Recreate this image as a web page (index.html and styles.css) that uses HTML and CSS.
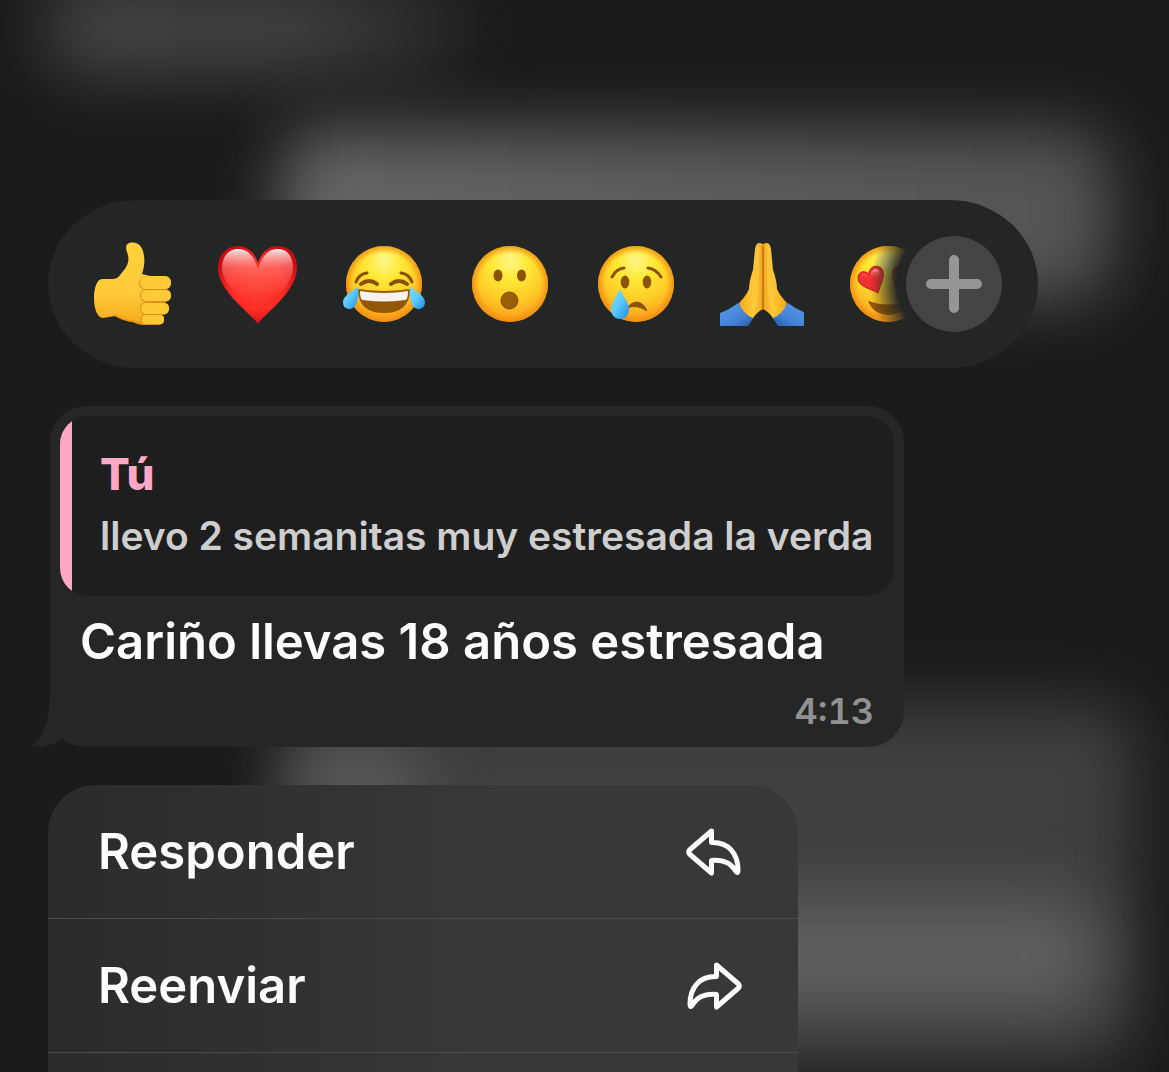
FILE: index.html
```html
<!DOCTYPE html>
<html lang="es">
<head>
<meta charset="utf-8">
<meta name="viewport" content="width=device-width, initial-scale=1">
<title>Chat</title>
<link rel="stylesheet" href="styles.css">
</head>
<body>
<div class="backdrop" aria-hidden="true">
  <span class="glow glow-header"></span>
  <span class="glow glow-upper"></span>
  <span class="glow glow-lower"></span>
  <span class="glow glow-spot"></span>
  <span class="glow glow-band"></span>
</div>

<svg class="defs" width="0" height="0" aria-hidden="true">
  <defs>
    <radialGradient id="face" cx=".5" cy=".2" r=".8">
      <stop offset="0" stop-color="#fff68a"/><stop offset=".3" stop-color="#ffe935"/><stop offset=".65" stop-color="#ffcb26"/><stop offset="1" stop-color="#fb9a1c"/>
    </radialGradient>
    <radialGradient id="rim" cx=".5" cy=".5" r=".5">
      <stop offset=".8" stop-color="#f49312" stop-opacity="0"/><stop offset="1" stop-color="#ef8a10" stop-opacity=".85"/>
    </radialGradient>
    <linearGradient id="tear" x1="0" y1="0" x2="1" y2="1">
      <stop offset="0" stop-color="#79dcff"/><stop offset=".5" stop-color="#5cc8fb"/><stop offset="1" stop-color="#168be6"/>
    </linearGradient>
    <radialGradient id="red" cx=".5" cy=".5" r=".55">
      <stop offset="0" stop-color="#ff3f2c"/><stop offset=".6" stop-color="#fb2c25"/><stop offset="1" stop-color="#c90a15"/>
    </radialGradient>
    <linearGradient id="gloss" x1="0" y1="0" x2="0" y2="1">
      <stop offset="0" stop-color="#fff" stop-opacity=".9"/><stop offset=".35" stop-color="#ff8e86" stop-opacity=".55"/><stop offset="1" stop-color="#ff5a50" stop-opacity="0"/>
    </linearGradient>
    <linearGradient id="skin" x1="0" y1="0" x2="0" y2="1">
      <stop offset="0" stop-color="#ffd03c"/><stop offset=".6" stop-color="#ffcb3a"/><stop offset="1" stop-color="#f3a91c"/>
    </linearGradient>
    <linearGradient id="palm" x1="0" y1="0" x2="1" y2="0">
      <stop offset="0" stop-color="#f5a81b"/><stop offset=".6" stop-color="#ffc935"/><stop offset="1" stop-color="#f0a322"/>
    </linearGradient>
    <linearGradient id="sleeve" x1="0" y1="0" x2="1" y2="1">
      <stop offset="0" stop-color="#5a9bea"/><stop offset=".6" stop-color="#4583d6"/><stop offset="1" stop-color="#2459a8"/>
    </linearGradient>
    <g id="head"><circle cx="42" cy="42" r="38" fill="url(#face)"/><circle cx="42" cy="42" r="38" fill="url(#rim)"/></g>
    <g id="hand">
      <path d="M18 61Q9 68 0 71V84H28L34 75Z" fill="url(#sleeve)"/>
      <path d="M43.500 3Q42 .5 39 1Q36 1 35 7L33 28Q29 39 29 47Q26 54 19 61Q23 72 33 76Q38 69 43.500 67Z" fill="url(#palm)"/>
      <path d="M38 6L37 50Q36 60 31 66" fill="none" stroke="#ffdb57" stroke-opacity=".3" stroke-width="3" stroke-linecap="round"/>
    </g>
  </defs>
</svg>

<main class="screen">
  <section class="reactions" aria-label="Reacciones">
    <div class="reaction-list">
      <button class="reaction" type="button" aria-label="Me gusta">
        <svg viewBox="0 0 84 84">
          <path d="M43 .5C36 0 35 5 37 10C40 18 38 23 34 28C30 33 28 37 23 37H12C7 37 4 46 4 56C4 66 7 76 13 76L25 74Q33 79 43 80Q49 83 58 83L60 34L52 32C54 26 55 20 54 14C53 5 49 1 43 .5Z" fill="url(#skin)"/>
          <path d="M25 73Q33 78 43 79Q49 82 58 82" fill="none" stroke="#e79a1a" stroke-width="2"/>
          <g fill="#dc9120"><rect x="49" y="34" width="32" height="14" rx="7"/><rect x="50" y="47" width="31" height="13" rx="6"/><rect x="50" y="60" width="29" height="13" rx="6"/><rect x="51" y="72" width="23" height="11" rx="5"/></g>
          <g fill="#ffca38"><rect x="50" y="34" width="31" height="13" rx="6"/><rect x="51" y="48" width="30" height="11" rx="5"/><rect x="51" y="61" width="28" height="11" rx="5"/><rect x="52" y="73" width="22" height="9" rx="4"/></g>
        </svg>
      </button>
      <button class="reaction" type="button" aria-label="Corazón">
        <svg viewBox="0 0 84 84">
          <path d="M42 82C37 73 2 50 2 26C2 12 11 4 22 4C32 4 39 11 42 21C45 11 52 4 62 4C73 4 81 12 81 26C81 50 47 73 42 82Z" fill="url(#red)"/>
          <path d="M42 60C26 60 6 42 6 26C6 14 13 7 22 7C32 7 38 14 42 27C46 14 52 7 62 7C71 7 77 14 77 26C77 42 58 60 42 60Z" fill="url(#gloss)"/>
        </svg>
      </button>
      <button class="reaction" type="button" aria-label="Risa">
        <svg viewBox="0 0 84 84">
          <use href="#head"/>
          <g fill="none" stroke="#895006" stroke-width="3" stroke-linecap="round"><path d="M14 40Q17 32 25 31M70 40Q67 32 59 31"/><path d="M19 42Q27 36 35 42M49 42Q57 36 65 42" stroke-width="4"/></g>
          <path d="M16 47Q42 51 68 47Q68 71 42 71Q16 71 16 47Z" fill="#925707"/>
          <path d="M18 49Q42 53 66 49Q66 58 63 58Q42 61 21 58Q18 58 18 49Z" fill="#f5f1ee"/>
          <path d="M16 45C10 49 1 54 1 60C1 65 4 67 8 67C15 66 17 56 16 45Z" fill="url(#tear)"/>
          <path d="M68 45C74 49 83 54 83 60C83 65 80 67 76 67C69 66 67 56 68 45Z" fill="url(#tear)"/>
        </svg>
      </button>
      <button class="reaction" type="button" aria-label="Sorpresa">
        <svg viewBox="0 0 84 84">
          <use href="#head"/>
          <g fill="#8b5307"><ellipse cx="30" cy="33.500" rx="4.500" ry="6"/><ellipse cx="53.500" cy="33.500" rx="4.500" ry="6"/></g>
          <circle cx="41.500" cy="58.500" r="8.500" fill="#965f08" stroke="#814d06"/>
        </svg>
      </button>
      <button class="reaction" type="button" aria-label="Tristeza">
        <svg viewBox="0 0 84 84">
          <use href="#head"/>
          <g fill="#8b5307"><ellipse cx="31" cy="40" rx="4.300" ry="6.500"/><ellipse cx="53" cy="40" rx="4.300" ry="6.500"/></g>
          <g fill="none" stroke="#8b5307" stroke-width="3" stroke-linecap="round"><path d="M18 35Q22 27 30 26M54 26Q62 27 67 35"/></g>
          <path d="M33 66Q37 60 43 60Q50 61 53 69Q43 62 33 66Z" fill="#8b5307" stroke="#8b5307" stroke-linejoin="round"/>
          <path d="M26 47C23 54 17 61 17 67C17 73 21 77 26 77C31 77 35 73 35 67C35 61 29 54 26 47Z" fill="url(#tear)"/>
        </svg>
      </button>
      <button class="reaction" type="button" aria-label="Gracias">
        <svg viewBox="0 0 84 84">
          <use href="#hand"/>
          <use href="#hand" transform="translate(86 0) scale(-1 1)"/>
          <path d="M43 4V67" stroke="#b96d0c" stroke-width="1.500"/>
        </svg>
      </button>
      <button class="reaction" type="button" aria-label="Me encanta">
        <svg viewBox="0 0 84 84">
          <use href="#head"/>
          <path d="M22 59Q42 66 62 59Q57 73 42 73Q27 72 22 59Z" fill="#925707"/>
          <g fill="#f42f32" stroke="#ba1825" stroke-width="1"><path d="M32 51C26 47 12 45 12 36C12 31 17 27 23 32C23 25 30 22 35 26C41 32 34 43 32 51Z"/><path d="M52 51C58 47 72 45 72 36C72 31 67 27 61 32C61 25 54 22 49 26C43 32 50 43 52 51Z"/></g>
          <path d="M15 35Q15 31 20 32Q22 34 24 36Q24 28 30 27Q35 28 33 35Q25 39 15 35Z" fill="url(#gloss)"/>
        </svg>
      </button>
    </div>
    <button class="more" type="button" aria-label="Más reacciones">
      <svg viewBox="0 0 96 96"><path d="M48 24V72M25 48H71" stroke="#969497" stroke-width="10" stroke-linecap="round"/></svg>
    </button>
  </section>

  <article class="bubble">
    <svg class="tail" viewBox="0 0 44 60" aria-hidden="true"><path d="M18 0C18 28 15 46 0 59Q19 62 30 51Q36 57 44 59V0Z" fill="#252726"/></svg>
    <blockquote class="quote">
      <p class="quote-author">Tú</p>
      <p class="quote-text">llevo 2 semanitas muy estresada la verda</p>
    </blockquote>
    <p class="message">Cariño llevas 18 años estresada</p>
    <time class="time" datetime="04:13">4:13</time>
  </article>

  <nav class="menu" aria-label="Opciones del mensaje">
    <button class="menu-item" type="button">
      <span>Responder</span>
      <svg class="menu-icon" viewBox="0 0 56 48" aria-hidden="true"><path d="M25.500 3L3.500 22Q2 24 3.500 26L25.500 45V32.500C38 31.500 45 35 50 43.500Q52 46 52 42C52 26 43 14 25.500 14.500Z"/></svg>
    </button>
    <button class="menu-item" type="button">
      <span>Reenviar</span>
      <svg class="menu-icon" viewBox="0 0 56 48" aria-hidden="true"><path d="M30.500 3L52.500 22Q54 24 52.500 26L30.500 45V32.500C18 31.500 11 35 6 43.500Q4 46 4 42C4 26 13 14 30.500 14.500Z"/></svg>
    </button>
  </nav>
</main>
</body>
</html>
```
FILE: styles.css
```css
* {
  box-sizing: border-box;
}

body {
  margin: 0;
  background: #1b1b1b;
  color: #fcfcfc;
  font-family: Inter, "Liberation Sans", sans-serif;
}

button {
  margin: 0;
  padding: 0;
  border: 0;
  background: none;
  color: inherit;
  font: inherit;
}

svg {
  display: block;
}

p,
blockquote {
  margin: 0;
}

.defs {
  position: absolute;
}

/* Out-of-focus conversation behind the overlay */
.backdrop {
  position: absolute;
  inset: 0;
  overflow: hidden;
}

.glow {
  position: absolute;
  border-radius: 40px;
  filter: blur(32px);
}

.glow-header {
  left: 4%;
  top: -20px;
  width: 36%;
  height: 96px;
  background: linear-gradient(90deg, #454545, #404040 60%, #252525);
}

.glow-upper {
  left: 24%;
  right: 5%;
  top: 130px;
  height: 170px;
  background: linear-gradient(90deg, #666, #5a5a5a 60%, #545454);
}

.glow-lower {
  left: 24%;
  right: 3%;
  top: 705px;
  height: 360px;
  background: #404040;
}

.glow-spot {
  left: 25%;
  top: 740px;
  width: 11%;
  height: 90px;
  background: #5a5a5a;
}

.glow-band {
  left: 24%;
  right: 6%;
  top: 900px;
  height: 110px;
  background: #5f5f5f;
}

.screen {
  position: relative;
  display: flex;
  flex-direction: column;
  gap: 38px;
  min-height: 100vh;
  padding: 200px 48px 0;
}

.reactions {
  display: flex;
  align-items: center;
  width: 100%;
  max-width: 990px;
  padding: 36px 36px 36px 42px;
  border-radius: 88px / 84px;
  background: #242625;
}

.reaction-list {
  display: flex;
  flex: 1;
  gap: 42px;
  min-width: 0;
  overflow: hidden;
  -webkit-mask-image: radial-gradient(circle at calc(100% + 48px) 50%, transparent 57px, #000 84px);
  mask-image: radial-gradient(circle at calc(100% + 48px) 50%, transparent 57px, #000 84px);
}

.reaction {
  flex: none;
  width: 84px;
  height: 84px;
}

.more {
  flex: none;
  width: 96px;
  height: 96px;
  border-radius: 50%;
  background: #444446;
}

.bubble {
  position: relative;
  display: flex;
  flex-direction: column;
  width: 100%;
  max-width: 854px;
  margin-left: 2px;
  padding: 10px 10px 14px;
  border-radius: 36px;
  background: #252726;
}

.tail {
  position: absolute;
  left: -18px;
  bottom: 0;
  width: 44px;
  height: 60px;
}

.quote {
  position: relative;
  overflow: hidden;
  padding: 32px 16px 36px 40px;
  border-radius: 28px;
  background: #1e1e1e;
}

.quote::before {
  content: "";
  position: absolute;
  inset: 0 auto 0 0;
  width: 12px;
  background: #ffa8c5;
}

.quote-author {
  color: #ffa8c5;
  font-size: 44px;
  font-weight: 800;
  line-height: 52px;
}

.quote-text {
  margin-top: 12px;
  color: #cecece;
  font-size: 39px;
  font-weight: 600;
  line-height: 48px;
  white-space: nowrap;
}

.message {
  padding: 16px 20px 0;
  font-size: 49px;
  font-weight: 600;
  line-height: 60px;
}

.time {
  align-self: flex-end;
  margin-top: 18px;
  padding-right: 20px;
  color: #919191;
  font-size: 36px;
  font-weight: 600;
  font-variant-numeric: tabular-nums;
  line-height: 43px;
}

.menu {
  flex: 1;
  width: 100%;
  max-width: 750px;
  border-radius: 48px 48px 0 0;
  background: linear-gradient(90deg, #2b2b2b, #313131 30%, #383838 60%, #383838);
}

.menu-item {
  display: flex;
  align-items: center;
  justify-content: space-between;
  width: 100%;
  height: 134px;
  padding: 0 56px 0 50px;
  border-bottom: 1px solid #4b4b4b;
  font-size: 49px;
  font-weight: 600;
  line-height: 60px;
}

.menu-icon {
  width: 56px;
  height: 48px;
  fill: none;
  stroke: #fcfcfc;
  stroke-width: 5;
  stroke-linejoin: round;
}
```
